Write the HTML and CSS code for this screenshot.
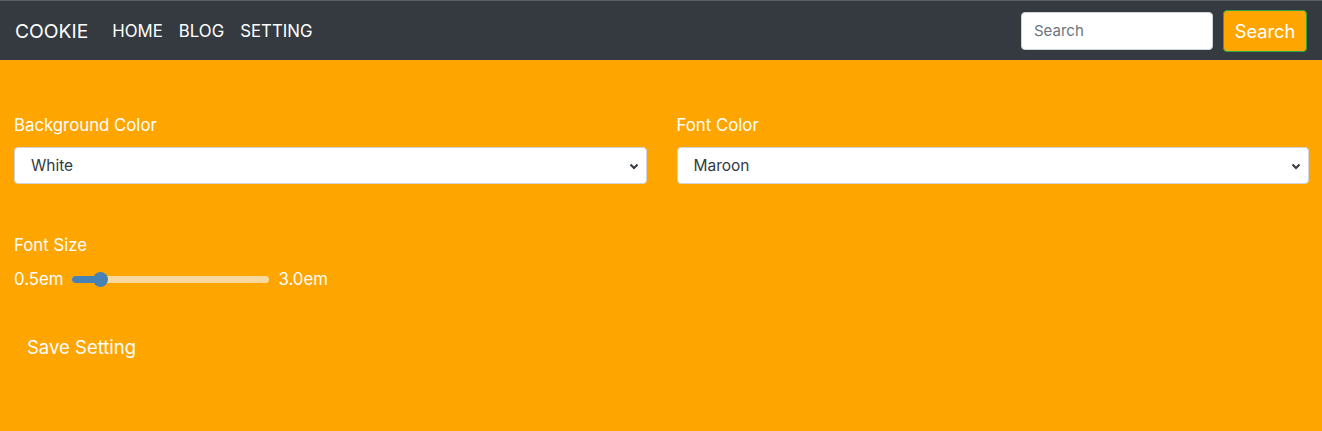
FILE: index.html
```html
<!DOCTYPE html>
<html>
<head>
<meta charset="utf-8">
<link rel="stylesheet" href="styles.css">
</head>
<body>
<nav class="navbar">
  <div class="nav-left">
    <span class="brand">COOKIE</span>
    <a class="nav-link">HOME</a>
    <a class="nav-link">BLOG</a>
    <a class="nav-link">SETTING</a>
  </div>
  <form class="search">
    <input class="search-input" type="text" placeholder="Search">
    <button class="search-btn" type="button">Search</button>
  </form>
</nav>
<main class="content">
  <div class="row">
    <div class="col">
      <label class="label">Background Color</label>
      <div class="select"><span>White</span><svg width="10" height="8" viewBox="0 0 10 8"><path d="M1.5 2.5 L5 6 L8.5 2.5" fill="none" stroke="#343a40" stroke-width="2"/></svg></div>
    </div>
    <div class="col">
      <label class="label">Font Color</label>
      <div class="select"><span>Maroon</span><svg width="10" height="8" viewBox="0 0 10 8"><path d="M1.5 2.5 L5 6 L8.5 2.5" fill="none" stroke="#343a40" stroke-width="2"/></svg></div>
    </div>
  </div>
  <div class="size-group">
    <label class="label">Font Size</label>
    <div class="range-row">
      <span>0.5em</span>
      <div class="range"><div class="fill"></div><div class="thumb"></div></div>
      <span>3.0em</span>
    </div>
  </div>
  <button class="save" type="button">Save Setting</button>
</main>
</body>
</html>
```
FILE: styles.css
```css
* { box-sizing: border-box; }
html, body { margin: 0; padding: 0; }
body {
  font-family: Inter, "Liberation Sans", Arial, sans-serif;
  font-size: 16.8px;
  line-height: 24px;
  background: #ffa500;
  color: #fff;
  height: 431px;
  overflow: hidden;
}
.navbar {
  height: 60px;
  background: #343a40;
  border-top: 1px solid #5a6168;
  display: flex;
  align-items: center;
  justify-content: space-between;
  padding: 0 15px 0 15px;
}
.nav-left { display: flex; align-items: center; }
.brand { font-size: 19.3px; margin-right: 24px; }
.nav-link { font-size: 16.8px; margin-right: 16px; color: #fff; }
.search { display: flex; align-items: center; gap: 10px; }
.search-input {
  width: 192px;
  height: 38px;
  border: 1px solid #ced4da;
  border-radius: 4px;
  padding: 0 12px;
  font: 15px Inter, "Liberation Sans", Arial, sans-serif;
  color: #495057;
}
.search-input::placeholder { color: #6c757d; }
.search-btn {
  width: 84px;
  height: 42px;
  background: #ffa500;
  border: 1px solid #28a745;
  border-radius: 4px;
  color: #fff;
  font: 18.3px Inter, "Liberation Sans", Arial, sans-serif;
  padding: 0;
}
.content { padding: 53px 13px 0 14px; }
.row { display: flex; gap: 30px; }
.col { flex: 1; }
.label { display: block; margin-bottom: 10px; }
.select {
  height: 37px;
  background: #fff;
  border: 1px solid #ced4da;
  border-radius: 4px;
  display: flex;
  align-items: center;
  justify-content: space-between;
  padding: 0 7px 0 16px;
  color: #343a40;
  font-size: 15.5px;
}
.size-group { margin-top: 49px; }
.range-row { display: flex; align-items: center; gap: 9px; }
.range {
  position: relative;
  width: 197px;
  height: 7px;
  background: #f7d9a0;
  border-radius: 4px;
}
.fill {
  position: absolute;
  left: 0; top: 0; bottom: 0;
  width: 30px;
  background: #4682b4;
  border-radius: 4px;
}
.thumb {
  position: absolute;
  left: 21px;
  top: -4px;
  width: 15px;
  height: 15px;
  border-radius: 50%;
  background: #4682b4;
}
.save {
  display: block;
  margin-top: 37px;
  background: transparent;
  border: 0;
  color: #fff;
  font: 18.5px/27px Inter, "Liberation Sans", Arial, sans-serif;
  padding: 6px 13px;
}
```
